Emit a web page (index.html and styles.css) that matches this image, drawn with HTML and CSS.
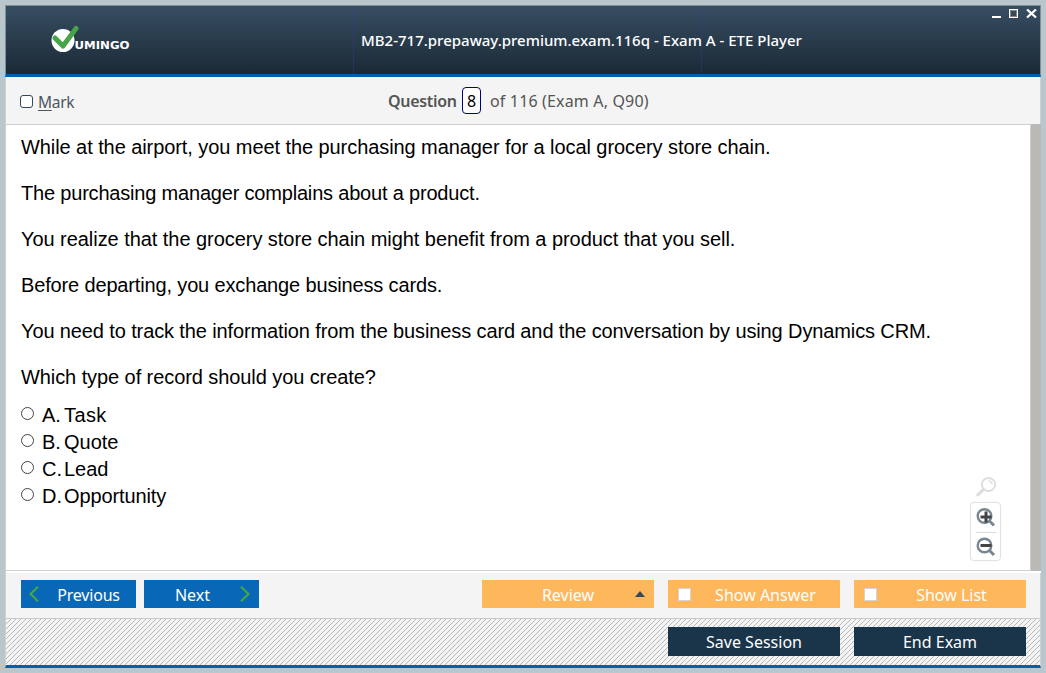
FILE: index.html
```html
<!DOCTYPE html>
<html lang="en">
<head>
<meta charset="utf-8">
<title>ETE Player</title>
<link rel="stylesheet" href="styles.css">
</head>
<body>
<div class="window">
  <header class="titlebar">
    <svg class="logo" width="86" height="34" viewBox="0 0 86 34">
      <circle cx="15" cy="17.500" r="11.500" fill="#fff"/>
      <path d="M7 15 15 23 28 5.500" fill="none" stroke="#46a546" stroke-width="5" stroke-linecap="round" stroke-linejoin="round"/>
      <text class="logo-text" x="26.500" y="25.600" textLength="55" lengthAdjust="spacingAndGlyphs">UMINGO</text>
    </svg>
    <h1 class="title">MB2-717.prepaway.premium.exam.116q - Exam A - ETE Player</h1>
    <svg class="controls" width="46" height="10" viewBox="0 0 46 10" shape-rendering="crispEdges">
      <path d="M0 7h9v2H0z" fill="#fff"/>
      <path d="M17.500.500h8v8h-8z" fill="none" stroke="#fff"/>
      <path d="M18.500 1.500h6v6h-6z" fill="none" stroke="#8b8681"/>
      <path d="M35 .500 44 8.500M44 .500 35 8.500" stroke="#fff" stroke-width="2.300" shape-rendering="auto"/>
    </svg>
  </header>
  <div class="statusbar">
    <label class="mark"><span class="mark-box"></span><span><u>M</u>ark</span></label>
    <div class="counter"><b class="counter-label">Question</b><span class="number">8</span><span class="counter-total">of 116 (Exam A, Q90)</span></div>
  </div>
  <main class="main">
    <section class="question">
      <p class="l1">While at the airport, you meet the purchasing manager for a local grocery store chain.</p>
      <p class="l2">The purchasing manager complains about a product.</p>
      <p class="l3">You realize that the grocery store chain might benefit from a product that you sell.</p>
      <p class="l4">Before departing, you exchange business cards.</p>
      <p class="l5">You need to track the information from the business card and the conversation by using Dynamics CRM.</p>
      <p class="l6">Which type of record should you create?</p>
      <div class="answers">
        <label class="answer"><i class="radio"></i><span class="letter">A.</span><span class="task">Task</span></label>
        <label class="answer"><i class="radio"></i><span class="letter">B.</span><span>Quote</span></label>
        <label class="answer"><i class="radio"></i><span class="letter">C.</span><span>Lead</span></label>
        <label class="answer"><i class="radio"></i><span class="letter">D.</span><span class="opportunity">Opportunity</span></label>
      </div>
    </section>
    <div class="zoom">
      <svg width="22" height="22" viewBox="0 0 22 22" fill="none" stroke="#dedede">
        <circle cx="13.500" cy="8.500" r="6.600" stroke-width="2"/>
        <path d="M13.500 5a3.500 3.500 0 0 1 3.500 3.500" stroke-width="1.500"/>
        <path d="M8.500 13.500 2.800 18.800" stroke-width="3.200" stroke-linecap="round"/>
      </svg>
      <div class="zoom-box">
        <svg class="zoom-icon" width="20" height="20" viewBox="0 0 20 20" fill="none">
          <circle cx="8.500" cy="8.500" r="6.800" stroke="#788690" stroke-width="2.400"/>
          <path d="M13.500 13.500 18 18" stroke="#788690" stroke-width="3"/>
          <path d="M4.500 9.500h11M10 4v11" stroke="#444" stroke-width="3"/>
        </svg>
        <svg class="zoom-icon" width="20" height="20" viewBox="0 0 20 20" fill="none">
          <circle cx="8.500" cy="8.500" r="6.800" stroke="#788690" stroke-width="2.400"/>
          <path d="M13.500 13.500 18 18" stroke="#788690" stroke-width="3"/>
          <path d="M4.500 8.500h11" stroke="#444" stroke-width="3"/>
        </svg>
      </div>
    </div>
    <div class="scrollbar"></div>
  </main>
  <nav class="toolbar">
    <button class="btn blue"><svg width="10" height="16" viewBox="0 0 10 16"><path d="M9 .7 1.500 8 9 15.300" fill="none" stroke="#46a546" stroke-width="2.200"/></svg><span class="btn-text prev-text">Previous</span></button>
    <button class="btn blue"><span class="btn-text next-text">Next</span><svg width="10" height="16" viewBox="0 0 10 16"><path d="M1 .7 8.500 8 1 15.300" fill="none" stroke="#46a546" stroke-width="2.200"/></svg></button>
    <button class="btn orange review"><span class="btn-text">Review</span><i class="caret"></i></button>
    <button class="btn orange"><i class="check"></i><span class="btn-text">Show Answer</span></button>
    <button class="btn orange"><i class="check"></i><span class="btn-text">Show List</span></button>
  </nav>
  <footer class="footer">
    <button class="btn dark"><span class="btn-text">Save Session</span></button>
    <button class="btn dark"><span class="btn-text">End Exam</span></button>
  </footer>
</div>
</body>
</html>
```
FILE: styles.css
```css
* { box-sizing: border-box; }
body { margin: 0; padding: 5px; height: 673px; overflow: hidden; background: #b9c6cc; font-family: "Noto Sans", sans-serif; }
.window { width: 1036px; height: 663px; display: flex; flex-direction: column; background: #f4f4f4; }
.titlebar { height: 72px; display: grid; grid-template-columns: 347px 1fr 56px; align-items: start; border: 1px solid #7f8f95; border-bottom: 3px solid #0060b0; background: linear-gradient(#3038a066 0 0) 347px 0 / 1px 100% no-repeat, linear-gradient(#3038a066 0 0) 695px 0 / 1px 100% no-repeat, linear-gradient(#374e62, #1b2936); }
.logo { margin: 17px 0 0 42px; }
.logo-text { font: bold 11px "DejaVu Sans", sans-serif; fill: #fff; }
.title { margin: 23px 0 0 8px; font-size: 15px; line-height: 22px; font-weight: 500; color: #fff; white-space: nowrap; }
.controls { margin: 3px 0 0 8px; }
.statusbar { height: 48px; display: grid; grid-template-columns: 367px 1fr; border: 1px solid #d0d0d0; border-top: 0; padding-left: 14px; color: #555; font-size: 16px; line-height: 24px; }
.mark { display: flex; gap: 5px; padding-top: 13px; color: #4c5661; font-size: 15.5px; letter-spacing: -.3px; }
.mark-box { width: 13px; height: 13px; margin-top: 5px; border: 1px solid #34495e; border-radius: 3px; background: #fff; }
.mark u { text-underline-offset: 2px; text-decoration-thickness: 1px; }
.counter { display: flex; padding: 12px 0 0 1px; white-space: nowrap; }
.counter-label { width: 74px; font-weight: 600; letter-spacing: -.3px; }
.number { width: 19px; height: 27px; margin-top: -2px; border: 1px solid #000080; border-radius: 4px; background: #fff; color: #000; text-align: center; line-height: 27px; }
.counter-total { margin-left: 9px; letter-spacing: .16px; }
.main { height: 448px; display: flex; background: #fff; position: relative; border-left: 1px solid #d0d0d0; }
.question { flex: 1; height: 446px; border-bottom: 1px solid #d0d0d0; padding: 9px 0 0 15px; font: 20px/26px "Liberation Sans", Arial, sans-serif; color: #000; }
.question p { margin: 0 0 20px; white-space: nowrap; }
.l1 { letter-spacing: -.075px; }
.l2 { letter-spacing: -.19px; }
.l3 { letter-spacing: -.05px; }
.l4 { letter-spacing: -.15px; }
.l5 { letter-spacing: -.12px; }
.l6 { letter-spacing: -.08px; }
.answers { margin-top: -9px; }
.answer { height: 27px; display: flex; line-height: 29px; }
.task { letter-spacing: .4px; }
.opportunity { letter-spacing: -.12px; }
.radio { width: 13px; height: 13px; margin: 6px 8px 0 0; border: 1px solid #444; border-radius: 50%; }
.letter { width: 22px; }
.zoom { position: absolute; left: 964px; top: 351px; width: 31px; display: flex; flex-direction: column; align-items: center; gap: 4px; }
.zoom-box { width: 31px; height: 59px; border: 1px solid #e2e2e2; border-radius: 4px; box-shadow: 0 0 1px #ddd; padding: 0 5px; }
.zoom-icon { display: block; height: 29px; width: 20px; }
.zoom-icon + .zoom-icon { border-top: 1px solid #d9dde0; }
.scrollbar { width: 11px; height: 447px; margin-top: -1px; background: #bab9b5; border-left: 1px solid #cfcfcf; }
.toolbar { height: 46px; display: flex; gap: 14px; padding: 7px 14px 0 15px; border: 1px solid #d0d0d0; border-top: 0; border-bottom: 1px solid #c8c8c8; background: #f4f4f4; }
.btn { flex: none; width: 172px; height: 28px; margin: 0; padding: 0; border: 0; display: flex; align-items: center; color: #fff; font: 16px/28px "Noto Sans", sans-serif; white-space: nowrap; }
.btn-text { flex: 1; text-align: center; padding-top: 2px; }
.blue { width: 115px; background: #0867b7; padding: 0 9px 0 8px; }
.blue + .blue { margin-left: -6px; }
.prev-text { padding-left: 11px; letter-spacing: -.2px; }
.next-text { padding-right: 7px; }
.orange { background: #ffb75c; }
.review { margin-left: 209px; }
.review .btn-text { padding-left: 19px; }
.caret { margin-right: 9px; border: solid transparent; border-width: 0 5px 6px; border-bottom-color: #34495e; }
.check { width: 13px; height: 13px; margin-left: 10px; border: 1px solid #d3d3d3; background: #fff; }
.footer { flex: 1; display: flex; justify-content: flex-end; gap: 14px; padding: 8px 14px 0; border: 1px solid #d0d0d0; border-top: 0; border-bottom: 3px solid #0060b0; background: #f4f4f4 url("data:image/svg+xml,%3Csvg xmlns='http://www.w3.org/2000/svg' width='5' height='5' shape-rendering='crispEdges'%3E%3Cpath d='M4 0h1v1H4zM3 1h1v1H3zM2 2h1v1H2zM1 3h1v1H1zM0 4h1v1H0z' fill='%23b8b8b8'/%3E%3C/svg%3E"); }
.dark { height: 29px; background: #1a344a; }
.dark .btn-text { padding-top: 0; }
```
